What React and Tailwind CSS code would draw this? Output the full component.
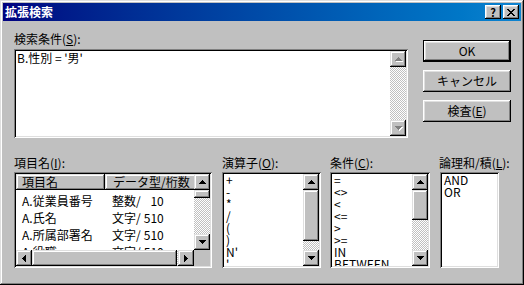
import React from "react";

const frame = "shadow-[inset_-1px_-1px_#000,inset_1px_1px_#dfdfdf,inset_-2px_-2px_#808080,inset_2px_2px_#fff]";
const raised = "shadow-[inset_-1px_-1px_#000,inset_1px_1px_#dfdfdf,inset_-2px_-2px_#808080,inset_2px_2px_#fff]";
const btnRaised = "shadow-[inset_-1px_-1px_#000,inset_1px_1px_#fff,inset_-2px_-2px_#808080,inset_2px_2px_#dfdfdf]";
const sunken = "shadow-[inset_1px_1px_#808080,inset_-1px_-1px_#fff,inset_2px_2px_#000,inset_-2px_-2px_#dfdfdf]";
const dither = "bg-[image:repeating-conic-gradient(#c0c0c0_0%_25%,#fff_0%_50%)] bg-[length:2px_2px]";

const arrows = {
    up: [7, 4, "M3 0h1v1h1v1h1v1h1v1H0V3h1V2h1V1h1z"],
    down: [7, 4, "M0 0h7v1H6v1H5v1H4v1H3V3H2V2H1V1H0z"],
    left: [4, 7, "M3 0h1v7H3V6H2V5H1V4H0V3h1V2h1V1h1z"],
    right: [4, 7, "M0 0h1v1h1v1h1v1h1v1H3v1H2v1H1v1H0z"],
};

const Arrow = ({ dir, disabled }) => {
    const [w, h, d] = arrows[dir];
    return (
        <svg width={w + 1} height={h + 1} viewBox={`0 0 ${w + 1} ${h + 1}`} shapeRendering="crispEdges" className="ml-px mt-px">
            {disabled && <path d={d} fill="#fff" transform="translate(1 1)" />}
            <path d={d} fill={disabled ? "#808080" : "#000"} />
        </svg>
    );
};

const ScrollBtn = ({ dir, disabled }) => (
    <div className={`w-4 h-4 shrink-0 bg-[#c0c0c0] flex items-center justify-center ${raised}`}>
        <Arrow dir={dir} disabled={disabled} />
    </div>
);

const VScroll = ({ thumb, disabled }) => (
    <div className="w-4 h-full flex flex-col">
        <ScrollBtn dir="up" disabled={disabled} />
        {thumb ? <div className={`w-4 shrink-0 bg-[#c0c0c0] ${raised}`} style={{ height: thumb }}></div> : null}
        <div className={`flex-1 ${dither}`}></div>
        <ScrollBtn dir="down" disabled={disabled} />
    </div>
);

const Label = ({ text, k, after = "):" }) => (
    <div className="h-[14px] leading-[14px] text-[12px] whitespace-nowrap">
        {text}(<span className="underline underline-offset-1">{k}</span>
        {after}
    </div>
);

const Button = ({ children, isDefault }) => (
    <div className={`h-[22px] flex items-center justify-center text-[12px] ${isDefault ? "border border-black" : ""}`}>
        <div className={`w-full h-full flex items-center justify-center bg-[#c0c0c0] ${btnRaised}`}>{children}</div>
    </div>
);

const fields = [
    ["A.従業員番号", "整数/", "10"],
    ["A.氏名", "文字/", "510"],
    ["A.所属部署名", "文字/", "510"],
    ["A.役職", "文字/", "510"],
];

const operators = ["+", "-", "*", "/", "(", ")", "N'", "'"];
const conditions = ["=", "<>", "<", "<=", ">", ">=", "IN", "BETWEEN"];

const SimpleList = ({ items, thumb, className }) => (
    <div className={`h-[96px] bg-white p-[2px] ${sunken} ${className}`}>
        <div className="flex h-full">
            <div className="flex-1 overflow-hidden pl-[2px] text-[12px]">
                {items.map((it) => (
                    <div key={it} className="h-[12px] leading-[12px] whitespace-pre">
                        {it}
                    </div>
                ))}
            </div>
            {thumb && <VScroll thumb={thumb} />}
        </div>
    </div>
);

export default function App() {
    return (
        <div className={`w-[524px] h-[285px] bg-[#c0c0c0] p-[3px] flex flex-col text-black font-['Noto_Sans_CJK_JP','Liberation_Sans',sans-serif] ${frame}`}>
            {/* title bar */}
            <div className="h-[18px] flex items-center pl-[2px] pr-[2px] bg-gradient-to-r from-[#000080] to-[#1084d0]">
                <span className="text-white font-bold text-[12px] leading-[14px]">拡張検索</span>
                <div className="ml-auto flex gap-[2px]">
                    <div className={`w-4 h-[14px] bg-[#c0c0c0] flex items-center justify-center text-[11px] font-bold leading-none ${btnRaised}`}>?</div>
                    <div className={`w-4 h-[14px] bg-[#c0c0c0] flex items-center justify-center ${btnRaised}`}>
                        <svg width="8" height="7" viewBox="0 0 8 7" shapeRendering="crispEdges">
                            <path d="M0 0h2v1h1v1h2V1h1V0h2v1H7v1H6v1H5v1h1v1h1v1h1v1H6V6H5V5H3v1H2v1H0V6h1V5h1V4h1V3H2V2H1V1H0z" />
                        </svg>
                    </div>
                </div>
            </div>

            <div className="flex-1 pl-[11px] pt-[11px] flex flex-col">
                {/* search condition */}
                <div className="flex">
                    <div className="w-[394px]">
                        <Label text="検索条件" k="S" />
                        <div className={`mt-[3px] h-[89px] bg-white p-[2px] flex ${sunken}`}>
                            <div className="flex-1 pl-[1px] text-[12px] leading-[14px] whitespace-pre">B.性別 = '男'</div>
                            <VScroll disabled />
                        </div>
                    </div>
                    <div className="ml-[15px] w-[88px] pt-[8px] flex flex-col gap-[8px]">
                        <Button isDefault>OK</Button>
                        <Button>キャンセル</Button>
                        <Button>
                            検査(<span className="underline underline-offset-1">E</span>)
                        </Button>
                    </div>
                </div>

                {/* lists */}
                <div className="mt-[18px] flex">
                    <div className="w-[198px]">
                        <Label text="項目名" k="I" />
                        <div className={`mt-[2px] h-[96px] bg-white p-[2px] flex flex-col ${sunken}`}>
                            <div className="flex-1 flex min-h-0">
                                <div className="flex-1 min-w-0 overflow-hidden text-[12px]">
                                    <div className="flex h-4 leading-4 whitespace-nowrap">
                                        <div className={`w-[89px] shrink-0 pl-[6px] bg-[#c0c0c0] ${raised}`}>項目名</div>
                                        <div className={`w-[100px] shrink-0 pl-[8px] bg-[#c0c0c0] ${raised}`}>データ型/桁数</div>
                                    </div>
                                    <div className="mt-[2px]">
                                        {fields.map(([name, type, len]) => (
                                            <div key={name} className="h-[17px] leading-[17px] flex whitespace-nowrap">
                                                <div className="w-[89px] shrink-0 pl-[6px]">{name}</div>
                                                <div className="pl-[7px]">{type}</div>
                                                <div className="w-[23px] text-right">{len}</div>
                                            </div>
                                        ))}
                                    </div>
                                </div>
                                <VScroll thumb={8} />
                            </div>
                            <div className="h-4 flex">
                                <ScrollBtn dir="left" />
                                <div className={`w-[145px] bg-[#c0c0c0] ${raised}`}></div>
                                <div className={`flex-1 ${dither}`}></div>
                                <ScrollBtn dir="right" />
                                <div className="w-4 bg-[#c0c0c0]"></div>
                            </div>
                        </div>
                    </div>

                    <div className="ml-[10px] w-[99px]">
                        <Label text="演算子" k="O" />
                        <SimpleList items={operators} thumb={51} className="mt-[2px]" />
                    </div>

                    <div className="ml-[9px] w-[100px]">
                        <Label text="条件" k="C" />
                        <SimpleList items={conditions} thumb={30} className="mt-[2px]" />
                    </div>

                    <div className="ml-[9px] w-[60px]">
                        <Label text="論理和/積" k="L" />
                        <SimpleList items={["AND", "OR"]} className="mt-[2px] ml-px" />
                    </div>
                </div>
            </div>
        </div>
    );
}
